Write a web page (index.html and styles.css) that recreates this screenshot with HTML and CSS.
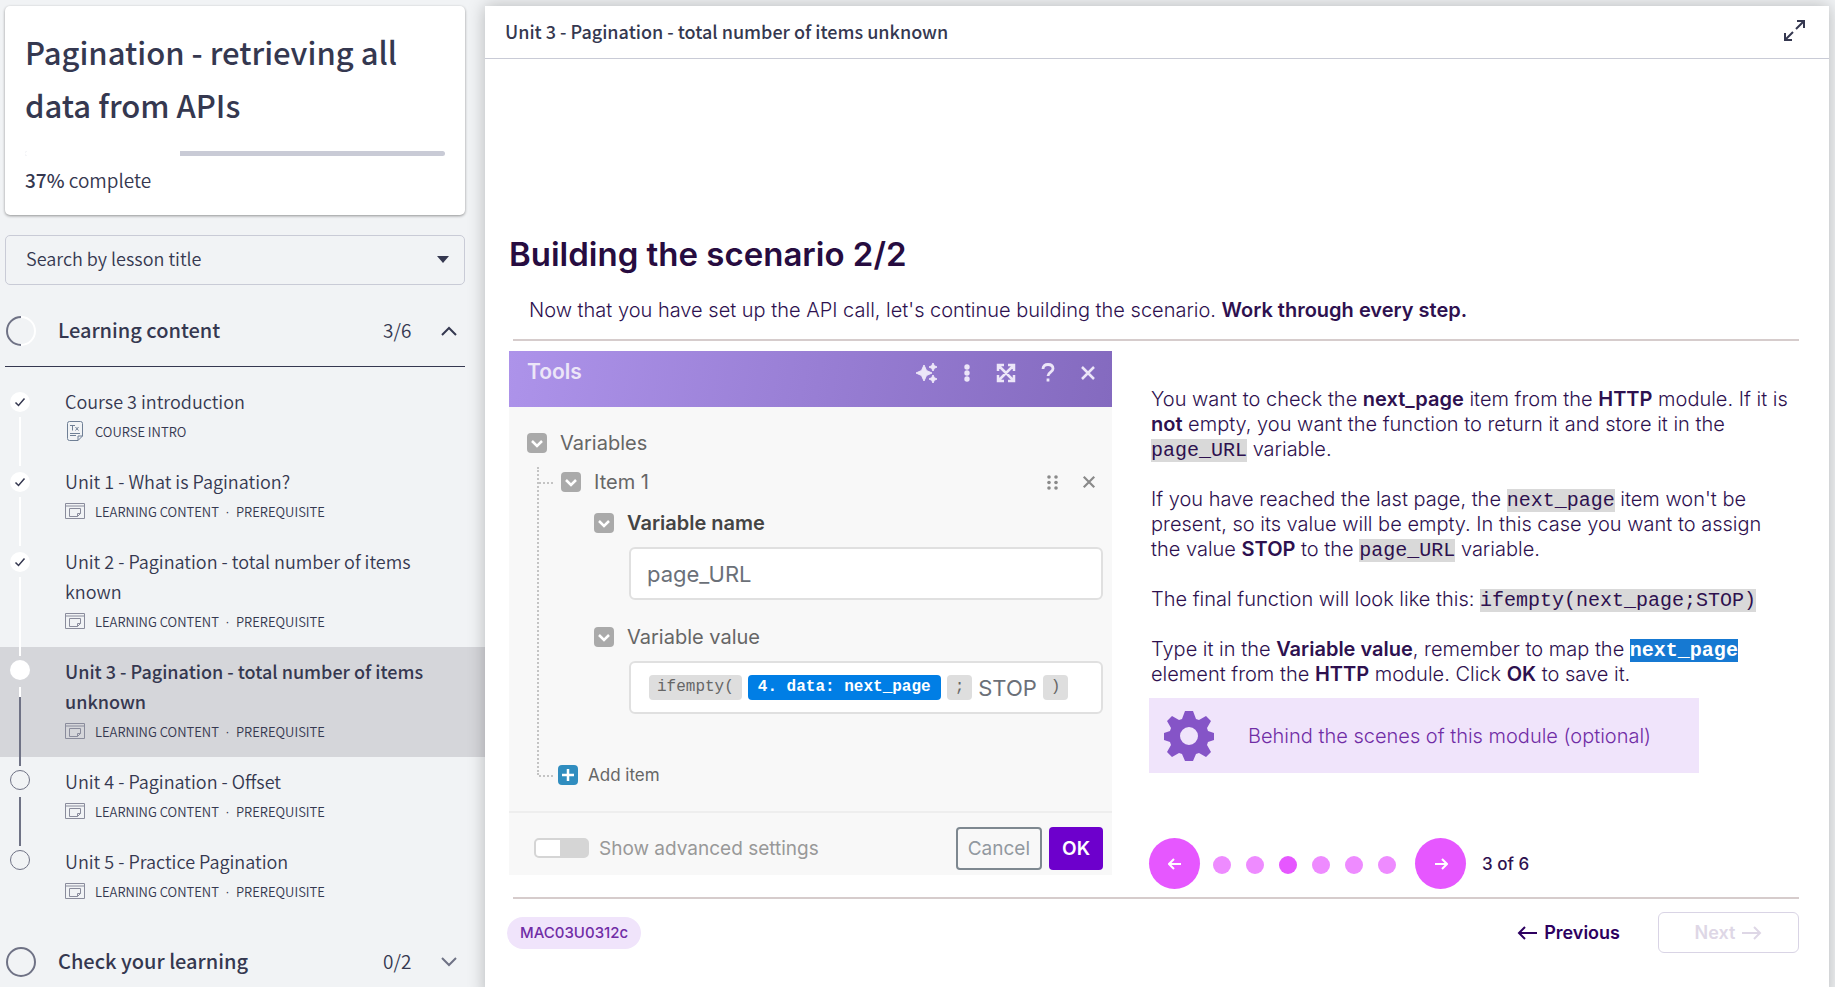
FILE: index.html
```html
<!DOCTYPE html>
<html lang="en">
<head>
<meta charset="utf-8">
<title>Pagination - retrieving all data from APIs</title>
<link rel="stylesheet" href="styles.css">
</head>
<body>
<svg class="defs" aria-hidden="true">
  <symbol id="i-content" viewBox="0 0 20 16"><g fill="none" stroke="currentColor"><path d="M.5.5h19v15H.5zM.5 3h19"/><path d="M12.500 13.500h-8v-8h11v5l-3 3zM12.500 13.500v-3h3"/></g></symbol>
  <symbol id="i-text" viewBox="0 0 16 20"><g fill="none" stroke="currentColor"><path d="M11 19.500H2.500a2 2 0 0 1-2-2v-15a2 2 0 0 1 2-2h11a2 2 0 0 1 2 2V15zM11 19.500V15h4.500M3 12.500h10M3 14.500h6M3 4.500h5M5.500 4.500v5M8.500 6l3 3.500M11.500 6l-3 3.500"/></g></symbol>
  <symbol id="i-check" viewBox="0 0 20 20"><path d="M5.500 10.500l3 3 6-7" fill="none" stroke="currentColor" stroke-width="1.500"/></symbol>
  <symbol id="i-down" viewBox="0 0 20 20"><path d="M5 8l5 5 5-5" fill="none" stroke="#fff" stroke-width="2.500"/></symbol>
  <symbol id="i-x" viewBox="0 0 16 16"><path d="M2 2l12 12M14 2L2 14" fill="none" stroke="currentColor" stroke-width="2.500"/></symbol>
</svg>
<div class="app">
  <aside class="sidebar">
    <section class="card">
      <h1 class="course">Pagination - retrieving all data from APIs</h1>
      <div class="progress"><div class="progress-fill" style="width:37%"></div></div>
      <p class="complete"><b>37%</b> complete</p>
    </section>
    <div class="search">
      <select class="search-select" aria-label="Search by lesson title"><option>Search by lesson title</option></select>
      <svg class="caret" viewBox="0 0 12 7"><path d="M0 0h12L6 7z" fill="#353850"/></svg>
    </div>
    <button class="section section-open" type="button">
      <svg class="ring" viewBox="0 0 30 30" fill="none" stroke-width="2"><path d="M15 1a14 14 0 0 1 0 28" stroke="#fff"/><path d="M15 1a14 14 0 0 0 0 28" stroke="#6f7285"/></svg>
      <span class="section-name">Learning content</span><span class="count">3/6</span>
      <svg class="chevron" viewBox="0 0 16 10"><path d="M1 9l7-7 7 7" fill="none" stroke="#353850" stroke-width="2"/></svg>
    </button>
    <ol class="lessons">
      <li class="lesson"><div class="rail"><svg class="dot done"><use href="#i-check"/></svg><span class="line"></span></div>
        <div class="info"><a class="name" href="#">Course 3 introduction</a><div class="meta"><span class="kind"><svg class="kind-text"><use href="#i-text"/></svg></span>COURSE INTRO</div></div></li>
      <li class="lesson"><div class="rail"><svg class="dot done"><use href="#i-check"/></svg><span class="line"></span></div>
        <div class="info"><a class="name" href="#">Unit 1 - What is Pagination?</a><div class="meta"><span class="kind"><svg class="kind-content"><use href="#i-content"/></svg></span>LEARNING CONTENT<span class="sep">·</span>PREREQUISITE</div></div></li>
      <li class="lesson"><div class="rail"><svg class="dot done"><use href="#i-check"/></svg><span class="line"></span></div>
        <div class="info"><a class="name" href="#">Unit 2 - Pagination - total number of items known</a><div class="meta"><span class="kind"><svg class="kind-content"><use href="#i-content"/></svg></span>LEARNING CONTENT<span class="sep">·</span>PREREQUISITE</div></div></li>
      <li class="lesson current"><div class="rail rail-open"><span class="dot done"></span><span class="line line-part"></span></div>
        <div class="info"><a class="name" href="#">Unit 3 - Pagination - total number of items unknown</a><div class="meta"><span class="kind"><svg class="kind-content"><use href="#i-content"/></svg></span>LEARNING CONTENT<span class="sep">·</span>PREREQUISITE</div></div></li>
      <li class="lesson"><div class="rail rail-open"><span class="dot todo"></span><span class="line line-todo"></span></div>
        <div class="info"><a class="name" href="#">Unit 4 - Pagination - Offset</a><div class="meta"><span class="kind"><svg class="kind-content"><use href="#i-content"/></svg></span>LEARNING CONTENT<span class="sep">·</span>PREREQUISITE</div></div></li>
      <li class="lesson"><div class="rail rail-open"><span class="dot todo"></span></div>
        <div class="info"><a class="name" href="#">Unit 5 - Practice Pagination</a><div class="meta"><span class="kind"><svg class="kind-content"><use href="#i-content"/></svg></span>LEARNING CONTENT<span class="sep">·</span>PREREQUISITE</div></div></li>
    </ol>
    <button class="section" type="button">
      <svg class="ring" viewBox="0 0 30 30" fill="none" stroke-width="2"><circle cx="15" cy="15" r="14" stroke="#6f7285"/></svg>
      <span class="section-name">Check your learning</span><span class="count">0/2</span>
      <svg class="chevron" viewBox="0 0 16 10"><path d="M1 1l7 7 7-7" fill="none" stroke="#6f7285" stroke-width="2"/></svg>
    </button>
  </aside>

  <main class="main">
    <header class="topbar">
      <h2 class="lesson-title">Unit 3 - Pagination - total number of items unknown</h2>
      <button class="plain" type="button" aria-label="Full screen"><svg width="21" height="21" viewBox="0 0 21 21" fill="none" stroke="#353850" stroke-width="2"><path d="M12 9l8-8M13 1h7v7M9 12l-8 8M1 13v7h7"/></svg></button>
    </header>
    <article class="slide">
      <h3 class="heading">Building the scenario 2/2</h3>
      <p class="lead">Now that you have set up the API call, let's continue building the scenario. <b>Work through every step.</b></p>
      <hr class="rule">
      <div class="columns">
        <form class="dialog">
          <div class="dialog-head">
            <span class="dialog-title">Tools</span>
            <span class="tools">
              <button class="plain" type="button" aria-label="Assistant"><svg width="22" height="20" viewBox="0 0 22 20" fill="currentColor"><path d="M8 2l2.500 5.500L16 10l-5.500 2.500L8 18l-2.500-5.500L0 10l5.500-2.500zM17 0l1.300 2.700L21 4l-2.700 1.300L17 8l-1.300-2.700L13 4l2.700-1.300zM17 12l1.300 2.700L21 16l-2.700 1.300L17 20l-1.300-2.700L13 16l2.700-1.300z" stroke="currentColor"/></svg></button>
              <button class="plain" type="button" aria-label="More"><svg width="8" height="20" viewBox="0 0 8 20" fill="currentColor"><circle cx="4" cy="4" r="2.700"/><circle cx="4" cy="10" r="2.700"/><circle cx="4" cy="16" r="2.700"/></svg></button>
              <button class="plain" type="button" aria-label="Expand"><svg width="20" height="20" viewBox="0 0 20 20" fill="none" stroke="currentColor" stroke-width="2.500"><path d="M2 2l16 16M18 2L2 18M2 8V2h6M12 2h6v6M18 12v6h-6M8 18H2v-6"/></svg></button>
              <button class="plain" type="button" aria-label="Help"><svg width="14" height="20" viewBox="0 0 14 20" fill="none" stroke="currentColor" stroke-width="2.800"><path d="M2 6c0-3 2-4.500 5-4.500s5 1.500 5 4.200c0 3.500-5 3.300-5 7.300M7 15.500v3"/></svg></button>
              <button class="plain" type="button" aria-label="Close"><svg width="16" height="16"><use href="#i-x"/></svg></button>
            </span>
          </div>
          <div class="fields">
            <div class="field"><svg class="toggle-box"><use href="#i-down"/></svg><span>Variables</span></div>
            <div class="tree">
              <div class="field item-row"><svg class="toggle-box"><use href="#i-down"/></svg><span>Item 1</span>
                <span class="item-tools"><svg width="11" height="15" viewBox="0 0 11 15" fill="currentColor"><circle cx="2" cy="2" r="1.800"/><circle cx="9" cy="2" r="1.800"/><circle cx="2" cy="7.500" r="1.800"/><circle cx="9" cy="7.500" r="1.800"/><circle cx="2" cy="13" r="1.800"/><circle cx="9" cy="13" r="1.800"/></svg>
                <button class="plain" type="button" aria-label="Remove item"><svg width="14" height="14"><use href="#i-x"/></svg></button></span></div>
              <div class="group">
                <label class="field" for="var-name"><svg class="toggle-box"><use href="#i-down"/></svg><b>Variable name</b></label>
                <input class="box" id="var-name" type="text" value="page_URL">
                <div class="field"><svg class="toggle-box"><use href="#i-down"/></svg><span id="value-label">Variable value</span></div>
                <div class="box tokens" role="textbox" aria-labelledby="value-label" contenteditable="true" spellcheck="false"><span class="token">ifempty(</span><span class="token mapped">4. data: next_page</span><span class="token">;</span><span class="literal">STOP</span><span class="token">)</span></div>
              </div>
              <button class="plain add" type="button"><svg class="add-box" viewBox="0 0 20 20"><path d="M10 4v12M4 10h12" stroke="#fff" stroke-width="2.500"/></svg>Add item</button>
            </div>
          </div>
          <div class="dialog-foot">
            <label class="advanced"><input class="switch" type="checkbox">Show advanced settings</label>
            <button class="btn cancel" type="button">Cancel</button><button class="btn ok" type="button">OK</button>
          </div>
        </form>
        <section class="notes">
          <div class="text">
            <p>You want to check the <b>next_page</b> item from the <b>HTTP</b> module. If it is <b>not</b> empty, you want the function to return it and store it in the <code>page_URL</code> variable.</p>
            <p>If you have reached the last page, the <code>next_page</code> item won't be present, so its value will be empty. In this case you want to assign the value <b>STOP</b> to the <code>page_URL</code> variable.</p>
            <p>The final function will look like this: <code>ifempty(next_page;STOP)</code></p>
            <p>Type it in the <b>Variable value</b>, remember to map the <code class="mapped-code">next_page</code> element from the <b>HTTP</b> module. Click <b>OK</b> to save it.</p>
          </div>
          <button class="behind" type="button">
            <svg class="gear" viewBox="-25 -25 50 50" fill="#8554c7"><path fill-rule="evenodd" d="M-4-25h8l3 8 3 1 7-4 5 5-4 7 1 3 6 2v7l-6 2-1 3 4 7-5 5-7-4-3 1-3 7h-8l-3-7-3-1-7 4-5-5 4-7-1-3-6-2v-7l6-2 1-3-4-7 5-5 7 4 3-1zM0-9a9 9 0 1 0 0 18a9 9 0 1 0 0-18z"/></svg>
            Behind the scenes of this module (optional)</button>
          <nav class="pager" aria-label="Steps">
            <button class="round" type="button" aria-label="Previous step"><svg width="14" height="12" viewBox="0 0 14 12" fill="none" stroke="#fff" stroke-width="2"><path d="M13 6H1M6 1L1 6l5 5"/></svg></button>
            <span class="dots"><i></i><i></i><i class="on"></i><i></i><i></i><i></i></span>
            <button class="round" type="button" aria-label="Next step"><svg width="14" height="12" viewBox="0 0 14 12" fill="none" stroke="#fff" stroke-width="2"><path d="M1 6h12M8 1l5 5-5 5"/></svg></button>
            <span class="step">3 of 6</span>
          </nav>
        </section>
      </div>
      <hr class="rule">
      <footer class="foot">
        <span class="code-badge">MAC03U0312c</span>
        <button class="plain previous" type="button"><svg width="20" height="14" viewBox="0 0 20 14" fill="none" stroke="currentColor" stroke-width="2"><path d="M20 7H2M8 1L2 7l6 6"/></svg>Previous</button>
        <button class="next" type="button" disabled>Next<svg width="20" height="14" viewBox="0 0 20 14" fill="none" stroke="currentColor" stroke-width="2"><path d="M0 7h18M12 1l6 6-6 6"/></svg></button>
      </footer>
    </article>
  </main>
</div>
</body>
</html>
```
FILE: styles.css
```css
* { box-sizing: border-box; }
body, h1, h2, h3, p, ol { margin: 0; padding: 0; }
body { background: #f1f3f5; color: #353850; font-family: "Noto Sans CJK SC", "Noto Sans", sans-serif; font-weight: 350; }
button, input, select { font: inherit; color: inherit; }
svg { display: block; flex: none; }
.defs { position: absolute; width: 0; height: 0; }
.plain { background: none; border: 0; padding: 0; }

.app { display: flex; min-height: 100vh; overflow: hidden; }
.sidebar { flex: 0 0 485px; padding-top: 6px; }
.card { min-height: 209px; margin: 0 20px 20px 5px; padding: 19px 20px 22px; background: #fff; border-radius: 5px; box-shadow: 0 1px 3px rgba(0,0,0,.4); }
.course { font-size: 31px; line-height: 53px; font-weight: 500; }
.progress { height: 5px; margin: 20px 0 12px; background: #c9cbd6; border-radius: 3px; overflow: hidden; }
.progress-fill { height: 100%; background: #fff; }
.complete { font-size: 19px; line-height: 23px; }
.complete b { font-weight: 500; }
.search { position: relative; margin: 0 20px 11px 5px; }
.search-select { display: block; width: 100%; height: 50px; padding: 0 20px 4px; font-size: 18px; background: none; border: 1px solid #c9cbd6; border-radius: 5px; appearance: none; }
.caret { position: absolute; right: 16px; top: 21px; width: 12px; height: 7px; pointer-events: none; }
.section { display: flex; align-items: center; width: 460px; height: 70px; margin: 0 20px 0 5px; padding: 0 8px 0 1px; background: none; border: 0; text-align: left; }
.section-open { height: 71px; border-bottom: 1px solid #353850; }
.ring { width: 30px; height: 30px; }
.section-name { flex: 1; padding: 0 0 3px 22px; font-size: 20px; font-weight: 500; }
.count { padding-bottom: 3px; font-size: 19px; width: 58px; }
.chevron { width: 16px; height: 10px; }
.lessons { list-style: none; margin: 10px 0; }
.lesson { display: flex; }
.current { background: #d5d6da; }
.rail { display: flex; flex-direction: column; align-items: center; flex: 0 0 40px; gap: 5px; padding-top: 15px; }
.rail-open { gap: 7px; padding-top: 13px; }
.dot { width: 20px; height: 20px; flex: none; border-radius: 50%; }
.done { background: #fff; }
.todo { border: 1px solid #6f7285; }
.line { flex: 1; width: 2px; margin-bottom: -9px; background: #fff; z-index: 1; }
.line-part { background: linear-gradient(#fff 10px, #6f7285 10px); }
.line-todo { background: #6f7285; }
.info { flex: 1; padding: 9px 48px 11px 25px; }
.name { display: block; font-size: 18px; line-height: 30px; color: inherit; text-decoration: none; }
.current .name { font-weight: 500; }
.meta { display: flex; align-items: center; height: 30px; font-size: 13px; }
.sep { display: flex; justify-content: center; width: 17px; font-family: "Liberation Sans", sans-serif; }
.kind { display: flex; justify-content: center; width: 20px; margin-right: 10px; color: #8a8c9c; }
.kind-content { width: 20px; height: 16px; }
.kind-text { width: 16px; height: 20px; color: #6f7f95; }

.main { flex: 1; min-width: 0; position: relative; z-index: 2; margin: 6px 6px 0 0; background: #fff; box-shadow: 0 0 16px rgba(0,0,0,.25); }
.topbar { display: flex; justify-content: space-between; align-items: center; height: 53px; padding: 0 24px 3px 20px; border-bottom: 1px solid #c9cbd6; }
.lesson-title { font-size: 18px; font-weight: 500; }
.slide { padding: 167px 30px 30px 24px; font-family: Inter, sans-serif; font-weight: 400; color: #2e114f; }
.heading { font-size: 33px; line-height: 56px; font-weight: 600; color: #270c40; }
.lead { padding: 14px 20px 13px; font-size: 20px; line-height: 28px; font-weight: 300; }
.slide b { font-weight: 600; }
.rule { margin: 2px 0 0 4px; border: 0; border-top: 2px solid #d6cccc; }
.columns { display: grid; grid-template-columns: minmax(0, 603fr) minmax(0, 650fr); gap: 37px; align-items: start; margin: 10px 0 8px; }

.dialog { background: #f8f8f8; color: #666; font-size: 20px; }
.dialog-head { display: flex; justify-content: space-between; height: 56px; padding: 7px 16px 0 18px; background: linear-gradient(100deg, #ad93ea, #846abf); color: #ece6f8; }
.dialog-title { font-size: 21px; line-height: 28px; font-weight: 600; }
.tools { display: flex; align-items: center; gap: 25px; height: 30px; }
.fields { padding: 21px 9px 0 18px; }
.field { display: flex; align-items: center; gap: 13px; height: 30px; }
.toggle-box { width: 20px; height: 20px; border-radius: 4px; background: #aaa; }
.tree { display: flex; flex-direction: column; height: 308px; margin: 9px 0 0 10px; padding-left: 22px; border-left: 2px dotted #c4c4c4; }
.item-row, .add { position: relative; }
.item-row::before, .add::before { content: ""; position: absolute; left: -22px; top: 50%; width: 14px; border-top: 2px dotted #c4c4c4; }
.item-tools { display: flex; align-items: center; gap: 24px; margin-left: auto; padding-right: 7px; color: #8a8a8a; }
.group { padding: 11px 0 0 33px; }
.group b { color: #444; }
.box { display: flex; align-items: center; width: calc(100% - 35px); height: 53px; margin: 9px 0 22px 35px; padding: 0 16px; background: #fff; border: 2px solid #e0e0e0; border-radius: 6px; color: #6b7078; font-size: 22px; }
.tokens { gap: 6px; margin-bottom: 0; padding: 0 18px; white-space: nowrap; }
.token { padding: 0 8px; border-radius: 4px; background: #dedede; color: #666; font: 16px/25px "Liberation Mono", monospace; }
.mapped { padding: 0 10px; background: #007ee5; color: #fff; font-weight: 700; }
.add { display: flex; align-items: center; gap: 10px; height: 20px; margin: auto 0 -10px -3px; font-size: 17px; }
.add::before { left: -19px; }
.add-box { width: 20px; height: 20px; border-radius: 4px; background: #308dbf; }
.dialog-foot { display: flex; align-items: center; gap: 7px; height: 64px; margin-top: 36px; padding: 8px 9px 0 25px; border-top: 2px solid #eee; font-size: 19px; }
.advanced { display: flex; align-items: center; gap: 10px; flex: 1; color: #999; white-space: nowrap; }
.switch { appearance: none; width: 55px; height: 20px; margin: 0; border: 2px solid #d5d5d5; border-radius: 5px; background: linear-gradient(90deg, #fff 24px, #d5d5d5 24px); }
.btn { height: 43px; border-radius: 4px; padding: 0 10px; }
.cancel { border: 2px solid #7e8890; background: none; color: #9299a0; }
.ok { border: 0; padding: 0 13px; background: #6d00cc; color: #fff; font-weight: 600; }

.notes { padding-top: 36px; }
.text { padding: 0 7px 0 2px; font-size: 20px; line-height: 25px; font-weight: 300; }
.text p + p { margin-top: 25px; }
code { font-family: "Liberation Mono", monospace; font-size: 20px; line-height: 20px; background: #d9d9d9; }
.mapped-code { background: #1679d2; color: #fff; font-weight: 700; }
.behind { display: flex; align-items: center; gap: 34px; width: 550px; height: 75px; margin-top: 11px; padding: 0 15px; border: 0; background: #f0e4fb; color: #702da6; font-size: 20px; font-weight: 300; white-space: nowrap; }
.gear { width: 50px; height: 50px; }
.pager { display: flex; align-items: center; margin-top: 65px; }
.round { display: flex; align-items: center; justify-content: center; width: 51px; height: 51px; padding: 0; border: 0; border-radius: 50%; background: #e657ff; }
.dots { display: flex; gap: 15px; padding: 3px 19px 0 13px; }
.dots i { width: 18px; height: 18px; border-radius: 50%; background: #ee8bff; }
.dots .on { background: #e657ff; }
.step { padding-left: 16px; font-size: 17px; font-weight: 500; }
.foot { display: flex; align-items: center; padding-top: 13px; }
.code-badge { margin: 0 auto 0 -2px; padding: 0 13px; font-size: 15px; line-height: 32px; border-radius: 16px; background: #f0e4fb; color: #702da6; font-weight: 500; }
.previous { display: flex; align-items: center; gap: 7px; font-size: 18px; font-weight: 600; color: #2d0060; }
.next { display: flex; align-items: center; justify-content: center; gap: 7px; width: 141px; height: 41px; margin-left: 38px; border: 1px solid #d9d4e5; border-radius: 6px; background: none; color: #ded7e6; font-size: 18px; font-weight: 600; }
```
